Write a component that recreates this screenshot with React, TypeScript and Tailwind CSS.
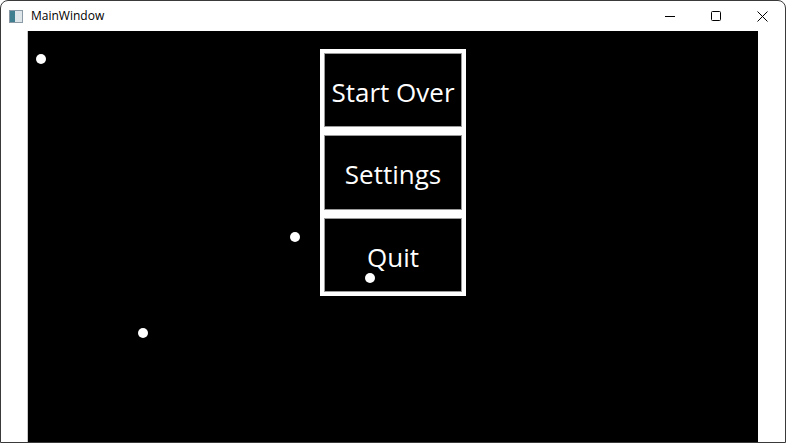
import React from 'react'

const dots = [
  { x: 13, y: 27.5 },
  { x: 267, y: 205.5 },
  { x: 115, y: 301.5 },
  { x: 342, y: 246.5 },
]

function MenuButton({ label }: { label: string }) {
  return (
    <div className="flex h-full items-center justify-center bg-black pt-[3px] shadow-[inset_0_0_0_1px_#9a9a9a]">
      <span className="text-[26px] leading-none text-white">{label}</span>
    </div>
  )
}

export default function App() {
  return (
    <div
      className="flex h-[443px] w-[786px] flex-col overflow-hidden rounded-t-[8px] border border-[#3a3a3a] bg-white"
      style={{ fontFamily: '"Segoe UI", "Open Sans", "Noto Sans", sans-serif' }}
    >
      {/* title bar */}
      <div className="flex h-[30px] shrink-0 items-center">
        <div className="ml-[8px] flex h-[13px] w-[14px] items-stretch border border-[#8a9aa6] bg-[#e8eef2]">
          <div className="w-[5px] bg-[#3f7f8f]" />
          <div className="flex-1 bg-[#dfe6ea]" />
        </div>
        <span className="ml-[8px] text-[12px] text-black">MainWindow</span>
        <div className="ml-auto flex h-full">
          <div className="flex w-[46px] items-center justify-center">
            <svg width="10" height="10" viewBox="0 0 10 10">
              <path d="M0 5.5h10" stroke="#000" strokeWidth="1" />
            </svg>
          </div>
          <div className="flex w-[46px] items-center justify-center">
            <svg width="10" height="10" viewBox="0 0 10 10">
              <rect x="0.5" y="0.5" width="9" height="9" rx="1" fill="none" stroke="#000" strokeWidth="1" />
            </svg>
          </div>
          <div className="flex w-[46px] items-center justify-center">
            <svg width="11" height="11" viewBox="0 0 11 11">
              <path d="M0.5 0.5l10 10M10.5 0.5l-10 10" stroke="#000" strokeWidth="1" />
            </svg>
          </div>
        </div>
      </div>

      {/* client area */}
      <div className="flex flex-1 pl-[26px] pr-[27px]">
        <div className="relative flex flex-1 justify-center border-l border-[#c8c8c8] bg-black pt-[18px]">
          <div className="flex h-[247px] w-[146px] flex-col gap-[8px] bg-white p-[4px]">
            <div className="h-[74px]">
              <MenuButton label="Start Over" />
            </div>
            <div className="h-[75px]">
              <MenuButton label="Settings" />
            </div>
            <div className="h-[74px]">
              <MenuButton label="Quit" />
            </div>
          </div>

          {dots.map((d, i) => (
            <div
              key={i}
              className="absolute h-[10px] w-[10px] -translate-x-1/2 -translate-y-1/2 rounded-full bg-white"
              style={{ left: d.x, top: d.y }}
            />
          ))}
        </div>
      </div>
    </div>
  )
}
